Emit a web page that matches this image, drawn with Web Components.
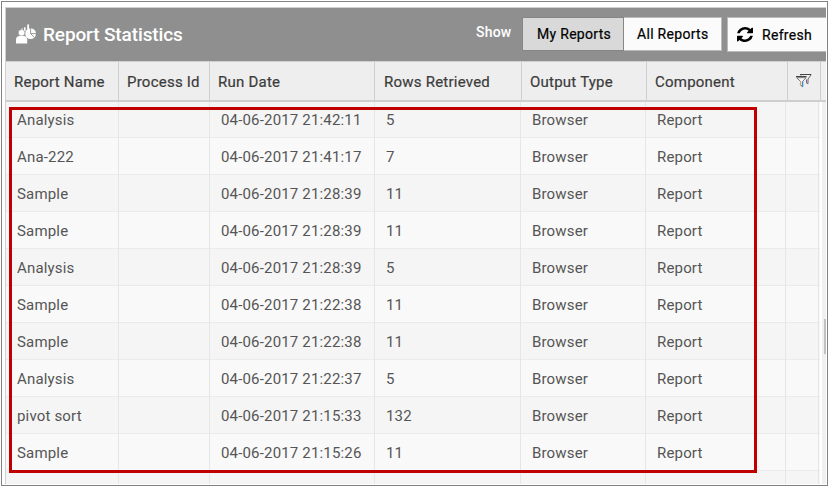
<!DOCTYPE html>
<html lang="en"><head><meta charset="utf-8"><title>Report Statistics</title>
<style>
html,body{margin:0;width:828px;height:486px;overflow:hidden;background:#fff}
body{font-family:Roboto,"Liberation Sans",sans-serif}
</style></head><body>
<report-window></report-window>
<script>
function define(name, html, setup){
  customElements.define(name, class extends HTMLElement{
    connectedCallback(){
      if(this.shadowRoot) return;
      const t=document.createElement('template'); t.innerHTML=html;
      this.attachShadow({mode:'open'}).append(t.content.cloneNode(true));
      if(setup) setup(this,this.shadowRoot);
    }
  });
}

define('users-chart-icon',`<style>:host{display:block;width:20px;height:20px}svg{display:block}</style>
<svg width="20" height="20" viewBox="0 0 20 20" fill="#fff"><path d="M8 3.200h1.600v4H8zM11.200.5h1.900v5h-1.900zM5.600 4.500H7v2H5.600z"/><circle cx="14.600" cy="9.600" r="5.400"/><path d="M14.600 4v5.600h5.400M14.600 9.600l3.800 3.900" stroke="#8f8f8f" stroke-width=".9" fill="none"/><circle cx="5.600" cy="8.800" r="3.300" stroke="#8f8f8f" stroke-width=".6"/><path d="M0 19.500v-3.900Q0 12.400 3 11.900h5.200q3 .5 3 3.700v3.900z"/></svg>`);

define('refresh-icon',`<style>:host{display:block;width:16px;height:15px}svg{display:block}</style>
<svg width="16" height="15" viewBox="0 0 1536 1536" preserveAspectRatio="none"><path d="M1511 928q0 5-1 7-64 268-268 434.500T764 1536q-146 0-282.500-55T238 1324l-129 129q-19 19-45 19t-45-19-19-45V960q0-26 19-45t45-19h448q26 0 45 19t19 45-19 45l-137 137q71 66 161 102t187 36q134 0 250-65t186-179q11-17 53-117 8-23 30-23h192q13 0 22.500 9.500t9.500 22.500zm25-800v448q0 26-19 45t-45 19h-448q-26 0-45-19t-19-45 19-45l138-138Q969 256 768 256q-134 0-250 65T332 500q-11 17-53 117-8 23-30 23H50q-13 0-22.500-9.500T18 608v-7q65-268 270-434.500T768 0q146 0 284 55.500T1297 212l130-129q19-19 45-19t45 19 19 45z"/></svg>`);

define('filter-icon',`<style>:host{display:block;width:16px;height:14px}svg{display:block}</style>
<svg width="16" height="14" viewBox="0 0 16 14" fill="none" stroke-width="1"><path d="M4 .5h11.300" stroke="#444"/><path d="M15 1l-3 4v4.700l-1.800-1.100M5 1.500l1 1" stroke="#666"/><path d="M10.500 5.500v3.500" stroke="#8b5a98"/><path d="M.6 3.700l3.900 3.700v3.800l2.200 1.500V7.400l3.400-3.700z" fill="#f5f5f5" stroke="#777"/><path d="M0 2.500h10.500" stroke="#444"/><path d="M4.500 7.500v3.800" stroke="#e0a070" stroke-width="1.200"/><path d="M6.500 7.500v5.200" stroke="#2f93d0" stroke-width="1.300"/></svg>`);

define('tool-button',`<style>
:host{display:flex;box-sizing:border-box;align-items:center;background:#fbfbfb;border:1px solid #b9b9b9;color:#000;font-size:14px;font-weight:400;-webkit-text-stroke:.2px #000;letter-spacing:.3px;line-height:20px;white-space:nowrap}
:host([active]){background:#d9d9d9;border-color:#858585}
</style><slot></slot>`);

define('report-toolbar',`<style>
:host{display:flex;box-sizing:border-box;height:54px;background:#8f8f8f;border-top:1px solid #cfcfcf;color:#fff;overflow:hidden}
users-chart-icon{margin:16px 0 0 10px;flex:none}
h1{margin:15px 0 0 7px;width:290px;font-size:19px;font-weight:500;line-height:24px;letter-spacing:-.12px;flex:none}
.show{width:46px;flex:none;margin:14px 0 0 143px;font-size:14px;font-weight:500;line-height:20px;letter-spacing:.22px}
tool-button{flex:none}
.mine{width:102px;height:34px;margin-top:9px;padding-left:14px}
.all{width:98px;height:34px;margin-top:9px;padding-left:13px;border-left:0}
.ref{width:100px;height:35px;margin:9px 0 0 5px;padding-left:9px;gap:9px}
</style>
<users-chart-icon></users-chart-icon><h1>Report Statistics</h1><span class="show">Show</span>
<tool-button class="mine" active>My Reports</tool-button><tool-button class="all">All Reports</tool-button>
<tool-button class="ref"><refresh-icon></refresh-icon><span>Refresh</span></tool-button>`);

define('grid-header',`<style>
:host{display:grid;box-sizing:border-box;height:41px;grid-template-columns:113px 91px 165px 147px 125px 141px 33px 1fr;background:#eee;border-top:1px solid #d0d0d0;border-bottom:2px solid #cecece;color:#3c3c3c;font-size:15px;font-weight:400;-webkit-text-stroke:.2px #3c3c3c;line-height:40px;letter-spacing:.23px;white-space:nowrap}
div{border-right:1px solid #cecece;padding-left:8px;height:38px;box-sizing:border-box}
div.rows{padding-left:9px}
div.f{padding:12px 0 0 8px}
div:last-child{border:0;padding:0;background:#f0f0f0}
</style><div>Report Name</div><div>Process Id</div><div>Run Date</div><div class="rows">Rows Retrieved</div><div>Output Type</div><div>Component</div><div class="f"><filter-icon></filter-icon></div><div></div>`);

define('grid-row',`<style>
:host{display:grid;box-sizing:border-box;height:37px;flex:none;grid-template-columns:113px 91px 165px 146px 125px 140px 33px;background:#f9f9f9;border-bottom:1px solid #ebebeb;color:#555;font-size:15px;line-height:38px;letter-spacing:.17px;white-space:nowrap}
:host([alt]){background:#f5f5f5}
div{border-right:1px solid #e6e6e6;padding-left:11px}
</style>`,(el,root)=>{
  (el.getAttribute('values')||'||||||').split('|').forEach(v=>{
    const d=document.createElement('div'); d.textContent=v; root.append(d);
  });
});

define('grid-scrollbar',`<style>
:host{display:flow-root;width:5px;background:#f0f0f0}
div{width:3px;height:35px;margin:217px 0 0 2px;background:#c1c1c1}
</style><div></div>`);

define('grid-body',`<style>
:host{display:flex;height:382px;overflow:hidden;background:#fff}
.rows{width:814px;display:flex;flex-direction:column;margin-right:2px;overflow:hidden;flex:none}
.rows grid-row:first-child{margin-top:-1px}
</style><div class="rows"></div><grid-scrollbar></grid-scrollbar>`,(el,root)=>{
  const rows=root.querySelector('.rows');
  [['Analysis','21:42:11','5'],['Ana-222','21:41:17','7'],['Sample','21:28:39','11'],['Sample','21:28:39','11'],['Analysis','21:28:39','5'],['Sample','21:22:38','11'],['Sample','21:22:38','11'],['Analysis','21:22:37','5'],['pivot sort','21:15:33','132'],['Sample','21:15:26','11'],null].forEach((r,i)=>{
    const e=document.createElement('grid-row');
    e.setAttribute('values',r?[r[0],'','04-06-2017 '+r[1],r[2],'Browser','Report',''].join('|'):'||||||');
    if(i%2===0) e.setAttribute('alt','');
    rows.append(e);
  });
});

define('highlight-frame',`<style>:host{position:absolute;left:9px;top:107px;width:748px;height:366px;box-sizing:border-box;border:3px solid #c00000;pointer-events:none}</style>`);

define('report-window',`<style>
:host{display:flex;flex-direction:column;position:relative;box-sizing:border-box;width:828px;height:486px;background:#fff;padding:1px 0 0 1px}
.edge{box-sizing:border-box;width:827px;height:485px;border:1px solid #828282;padding:5px 1px 1px 3px}
.panel{border-left:1px solid #d0d0d0;height:477px;overflow:hidden}
</style><div class="edge"><div class="panel"><report-toolbar></report-toolbar><grid-header></grid-header><grid-body></grid-body></div></div><highlight-frame></highlight-frame>`);
</script></body></html>
